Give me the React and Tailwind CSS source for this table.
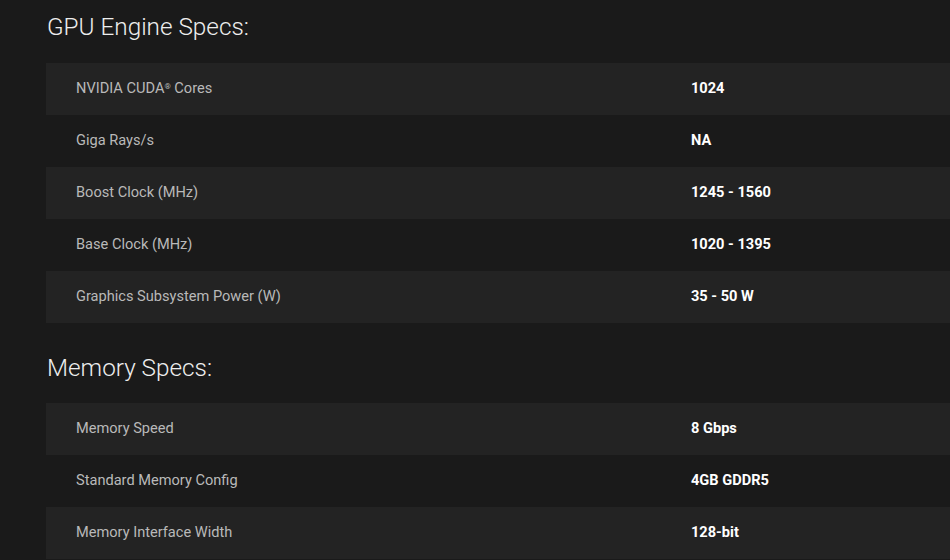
const gpuSpecs = [
  ['NVIDIA CUDA', '1024', true],
  ['Giga Rays/s', 'NA'],
  ['Boost Clock (MHz)', '1245 - 1560'],
  ['Base Clock (MHz)', '1020 - 1395'],
  ['Graphics Subsystem Power (W)', '35 - 50 W'],
]

const memorySpecs = [
  ['Memory Speed', '8 Gbps'],
  ['Standard Memory Config', '4GB GDDR5'],
  ['Memory Interface Width', '128-bit'],
]

function SpecTable({ rows }) {
  return (
    <div>
      {rows.map(([label, value, cuda], i) => (
        <div
          key={label}
          className={`flex h-[52px] items-center ${i % 2 === 0 ? 'bg-[#232323]' : 'bg-[#1a1a1a]'}`}
        >
          <div className="w-[645px] pl-[30px] text-[14.6px] text-[#b9b9b9]">
            {label}
            {cuda && (
              <>
                <sup className="text-[8px]">®</sup> Cores
              </>
            )}
          </div>
          <div className="text-[14.6px] font-bold text-white">{value}</div>
        </div>
      ))}
    </div>
  )
}

export default function App() {
  return (
    <div
      className="h-[560px] overflow-hidden bg-[#1a1a1a] pl-[46px]"
      style={{ fontFamily: 'Roboto, "Liberation Sans", sans-serif' }}
    >
      <h2 className="flex h-[63px] items-center pb-[8px] pl-[1px] text-[24.3px] font-light text-[#eeeeee]">
        GPU Engine Specs:
      </h2>
      <SpecTable rows={gpuSpecs} />
      <h2 className="flex h-[80px] items-center pt-[10px] pl-[1px] text-[24.3px] font-light text-[#eeeeee]">
        Memory Specs:
      </h2>
      <SpecTable rows={memorySpecs} />
    </div>
  )
}
